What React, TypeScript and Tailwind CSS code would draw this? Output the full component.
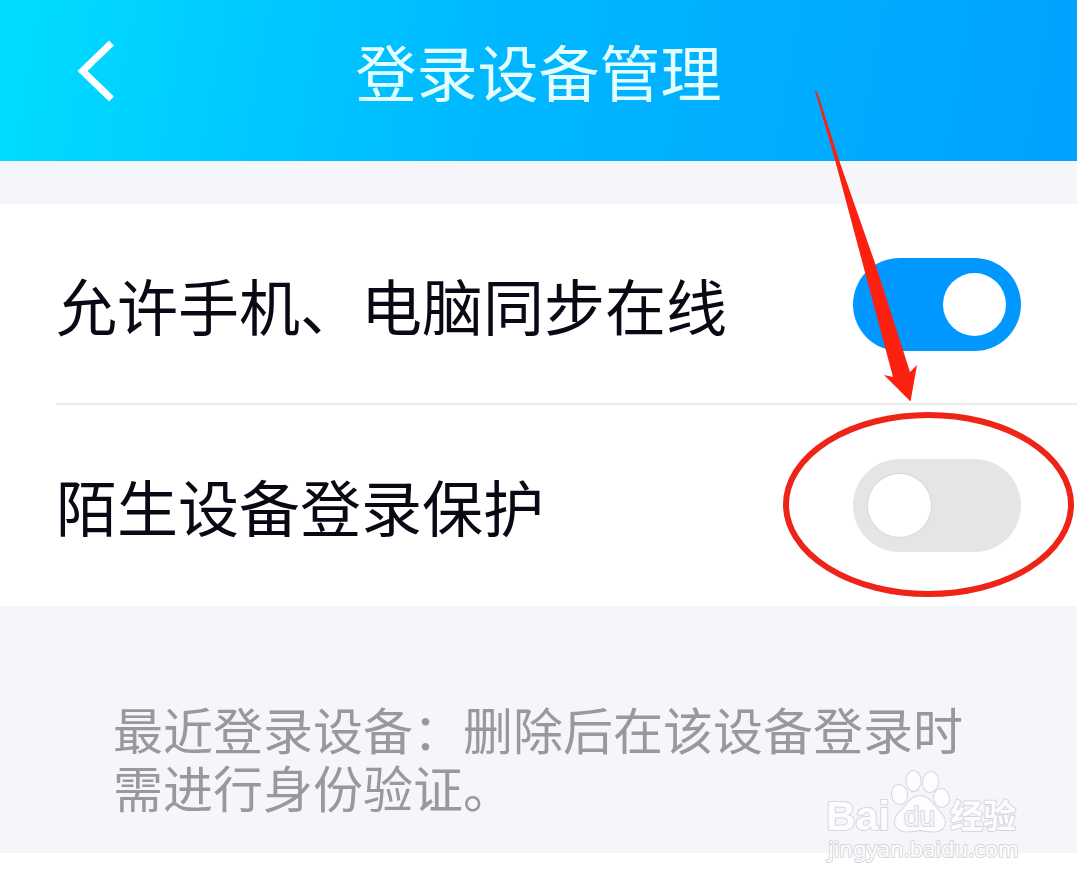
import { useState } from "react";

const SETTINGS = [
  { id: "sync-online", label: "允许手机、电脑同步在线", enabled: true },
  { id: "login-protect", label: "陌生设备登录保护", enabled: false },
];

function Header() {
  return (
    <header className="grid grid-cols-[1fr_auto_1fr] items-center bg-linear-100 from-[#00ddff] via-[#00b8ff] via-45% to-[#00a2ff] pt-[31px] pb-[50px]">
      <button type="button" aria-label="返回" className="ml-[72px] flex h-20 w-12 items-center justify-center">
        <svg viewBox="0 0 48 80" className="h-20 w-12" fill="none" stroke="white" strokeWidth="7">
          <path d="M39.5 12 L10.5 40 L39.5 68" />
        </svg>
      </button>
      <h1 className="text-[61px] leading-[80px] text-[#e2feff]">登录设备管理</h1>
    </header>
  );
}

function SettingRow({ id, label, enabled }: { id: string; label: string; enabled: boolean }) {
  const [checked, setChecked] = useState(enabled);

  return (
    <li className="group pl-14">
      <div className="flex items-center justify-between border-b-2 border-[#ececee] pt-[54px] pr-14 pb-[52px] group-last:border-transparent">
        <label htmlFor={id} className="text-[61px] leading-[90px] text-[#080914]">
          {label}
        </label>
        <input
          id={id}
          type="checkbox"
          role="switch"
          checked={checked}
          onChange={(e) => setChecked(e.target.checked)}
          className="flex h-[93px] w-[168px] shrink-0 cursor-pointer appearance-none items-center rounded-full bg-[#e5e5e5] px-[15px] before:h-[63px] before:w-[63px] before:rounded-full before:bg-white before:ring-1 before:ring-black/5 checked:justify-end checked:bg-[#0097ff] checked:before:ring-0"
        />
      </div>
    </li>
  );
}

function Annotation() {
  return (
    <svg
      aria-hidden="true"
      viewBox="777 0 300 606"
      className="pointer-events-none absolute top-0 right-0 h-[606px] w-[300px]"
    >
      <path d="M814.5 89 L818 94 L839 160 L876 266 L910 372 L917 365 L910.5 401.5 L884 375 L893 377 L835 160 Z" fill="#fb2010" />
      <ellipse cx="928.5" cy="504.5" rx="142.5" ry="89.5" fill="none" stroke="#ee2419" strokeWidth="6" />
    </svg>
  );
}

function Watermark() {
  return (
    <svg
      viewBox="820 765 210 105"
      className="pointer-events-none absolute right-[47px] -bottom-[17px] h-[105px] w-[210px] font-['Liberation_Sans','Noto_Sans_CJK_SC',sans-serif]"
      fill="#fdfdff"
      stroke="#d6d7da"
      strokeWidth="2"
      strokeLinejoin="round"
      paintOrder="stroke"
    >
      <text x="826" y="830" fontSize="41" fontWeight="700">Bai</text>
      <ellipse cx="899.5" cy="794.5" rx="7.5" ry="9.5" transform="rotate(-8 899.5 794.5)" />
      <ellipse cx="913.5" cy="781" rx="7" ry="10" />
      <ellipse cx="930.5" cy="782" rx="7.5" ry="10" transform="rotate(8 930.5 782)" />
      <ellipse cx="941.5" cy="798" rx="7.5" ry="9" transform="rotate(-12 941.5 798)" />
      <path d="M920 796 C928 796 932 803 937 809 C943 815 947 820 944 826 C941 833 932 832 920 830 C908 832 900 833 896 826 C893 820 897 814 903 809 C908 803 912 796 920 796 Z" />
      <text x="904" y="826" fontSize="28" fill="#f5f6fa">du</text>
      <text x="950" y="828" fontSize="33" fontWeight="700">经验</text>
      <text x="828" y="857" fontSize="22" className="font-['Noto_Sans',sans-serif]">jingyan.baidu.com</text>
    </svg>
  );
}

export default function App() {
  return (
    <main className="relative min-h-screen w-full overflow-hidden bg-white font-['Noto_Sans_CJK_SC',sans-serif]">
      <Header />
      <div className="h-[43px] bg-[#f5f6fa]" />
      <ul>
        {SETTINGS.map((item) => (
          <SettingRow key={item.id} {...item} />
        ))}
      </ul>
      <section className="relative bg-[#f5f6fa] px-[113px] pt-[93px] pb-[38px]">
        <p className="text-[50px] leading-[58px] text-[#98999d]">最近登录设备：删除后在该设备登录时需进行身份验证。</p>
        <Watermark />
      </section>
      <Annotation />
    </main>
  );
}
